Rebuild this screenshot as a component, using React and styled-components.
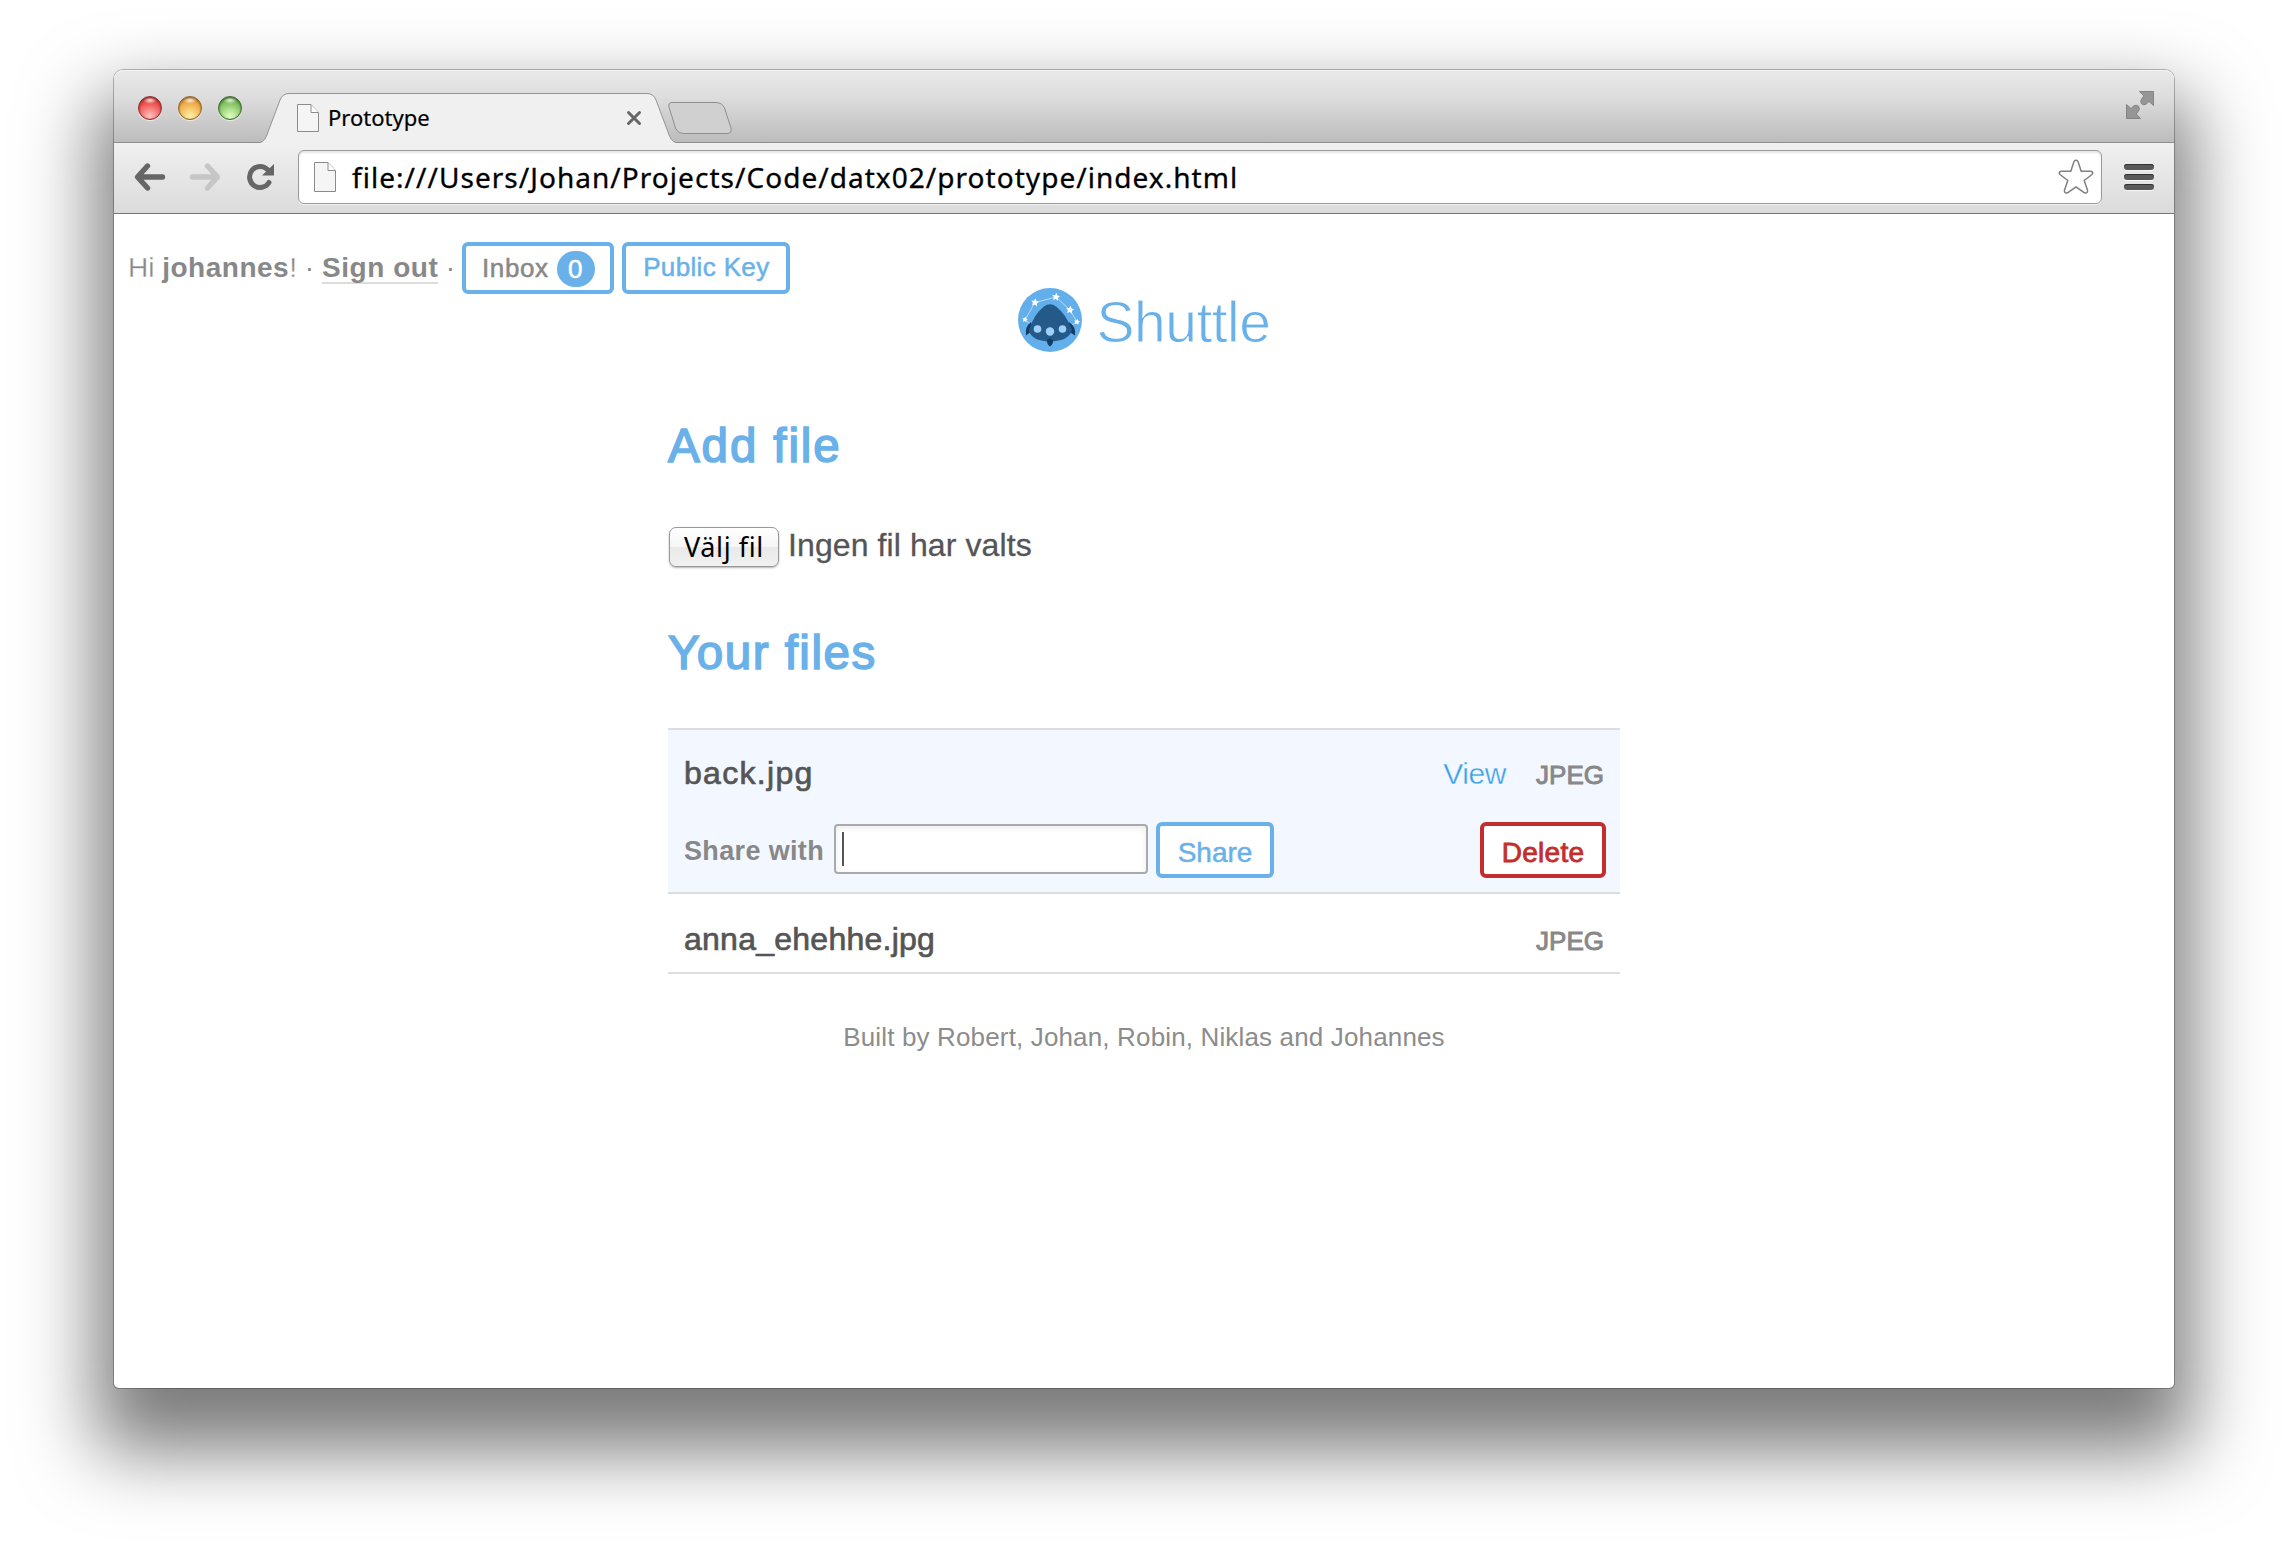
import React from "react";
import styled, { createGlobalStyle } from "styled-components";

const blue = "#6ab1ea";

const Global = createGlobalStyle`
  * { box-sizing: border-box; }
  html, body { margin: 0; background: #fff; }
  body { font-family: "Liberation Sans", Arial, sans-serif; width: 2288px; height: 1546px; overflow: hidden; }
  svg { display: block; flex: none; overflow: visible; }
`;

const Desktop = styled.div`
  width: 2288px;
  height: 1546px;
  padding: 70px 114px 158px;
  background: #fff;
`;

const BrowserWindow = styled.main`
  display: flex;
  flex-direction: column;
  width: 2060px;
  height: 1318px;
  border-radius: 9px 9px 5px 5px;
  background: #fff;
  box-shadow: 0 0 0 1px rgba(0, 0, 0, 0.25), 0 45px 76px 18px rgba(0, 0, 0, 0.52);
`;

const TabStrip = styled.header`
  display: flex;
  height: 73px;
  padding-left: 24px;
  border-bottom: 1px solid #8c8c8c;
  border-radius: 9px 9px 0 0;
  background: linear-gradient(#e9e9e9, #dcdcdc 40%, #bcbcbc);
  box-shadow: inset 0 1px 0 #f4f4f4;
`;

const Lights = styled.div`
  display: flex;
  gap: 16px;
  width: 122px;
  padding-top: 26px;
`;

const Light = styled.span`
  width: 24px;
  height: 24px;
  border: 1px solid ${(p) => p.$edge};
  border-radius: 50%;
  background:
    radial-gradient(ellipse 7px 4px at 50% 3px, rgba(255, 255, 255, 0.85), transparent),
    radial-gradient(circle at 50% 88%, ${(p) => p.$glow}, ${(p) => p.$color} 62%, ${(p) => p.$edge} 110%);
  box-shadow: 0 1px 1px rgba(255, 255, 255, 0.7), inset 0 1px 2px ${(p) => p.$edge};
`;

const Tab = styled.div`
  position: relative;
  display: flex;
  align-items: center;
  width: 416px;
  height: 73px;
  padding: 23px 35px 0 37px;
`;

const TabShape = styled.svg`
  position: absolute;
  left: 0;
  top: 0;
`;

const TabTitle = styled.span`
  position: relative;
  flex: 1;
  margin: -2px 0 0 9px;
  font: 22px/28px "Noto Sans", sans-serif;
  letter-spacing: ${(p) => p.$ls}px;
  color: #000;
  -webkit-text-stroke: 0.2px currentColor;
`;

const Raised = styled.span`
  position: relative;
  display: flex;
`;

const NewTab = styled.div`
  margin: 32px 0 0 -8px;
`;

const Expand = styled.div`
  margin: 21px 20px 0 auto;
`;

const Toolbar = styled.nav`
  display: flex;
  align-items: center;
  height: 71px;
  padding: 0 20px 2px;
  border-bottom: 1px solid #767676;
  background: linear-gradient(#f0f0f0, #dbdbdb);
`;

const NavIcons = styled.div`
  display: flex;
  gap: 25px;
  width: 164px;
`;

const Omnibox = styled.div`
  display: flex;
  align-items: center;
  width: 1804px;
  height: 54px;
  padding: 0 7px 0 15px;
  border: 1px solid #9a9a9a;
  border-radius: 6px;
  background: #fff;
  box-shadow: inset 0 2px 2px rgba(0, 0, 0, 0.1), 0 1px 0 rgba(255, 255, 255, 0.6);
`;

const Url = styled.span`
  flex: 1;
  margin-left: 16px;
  font: 28px/40px "Noto Sans", sans-serif;
  letter-spacing: ${(p) => p.$ls}px;
  white-space: nowrap;
  color: #000;
  -webkit-text-stroke: 0.3px currentColor;
`;

const Menu = styled.div`
  display: grid;
  gap: 4px;
  width: 30px;
  margin-left: 22px;
`;

const Bar = styled.span`
  height: 6px;
  border-radius: 3px;
  background: #5a5a5a;
  box-shadow: inset 0 1px 0 #333, 0 1px 0 #f6f6f6;
`;

const Page = styled.section`
  display: flex;
  flex-direction: column;
  align-items: center;
  flex: 1;
  padding-top: 28px;
  color: #555;
`;

const Account = styled.div`
  display: flex;
  align-items: center;
  align-self: flex-start;
  height: 52px;
  padding-left: 14px;
  font-size: 28px;
  line-height: 32px;
  color: #888;
  white-space: pre;
`;

const Thin = styled.span`
  margin-top: -1px;
  -webkit-text-stroke: 0.3px #fff;
`;

const Name = styled.strong`
  margin-top: -1px;
  letter-spacing: 0.5px;
`;

const SignOut = styled.a`
  height: 32px;
  margin-top: -1px;
  border-bottom: 2px solid #ddd;
  font-weight: bold;
  letter-spacing: 0.55px;
`;

const Dot = styled.span`
  width: ${(p) => p.$w}px;
  text-align: center;
`;

const Button = styled.button`
  display: flex;
  align-items: center;
  justify-content: center;
  width: ${(p) => p.$w}px;
  height: ${(p) => p.$h || 52}px;
  margin: 0 0 0 ${(p) => p.$ml || 0}px;
  padding: ${(p) => p.$pt || 0}px 0 ${(p) => p.$pb || 0}px;
  border: 4px solid ${(p) => p.$tone || blue};
  border-radius: 6px;
  background: #fff;
  color: ${(p) => p.$ink || p.$tone || blue};
  font: ${(p) => p.$size || 26}px/30px "Liberation Sans", Arial, sans-serif;
  letter-spacing: ${(p) => p.$ls || 0}px;
  -webkit-text-stroke: ${(p) => p.$bold ?? 0.5}px currentColor;
`;

const Badge = styled.span`
  width: 38px;
  height: 36px;
  margin: 2px 0 0 8px;
  border-radius: 18px;
  background: ${blue};
  color: #fff;
  line-height: 36px;
  text-align: center;
`;

const Brand = styled.div`
  display: flex;
  align-items: center;
  gap: 15px;
  height: 64px;
  margin-top: -6px;
`;

const Wordmark = styled.h1`
  margin: 3px 0 0;
  font-size: 57px;
  font-weight: normal;
  line-height: 64px;
  letter-spacing: -0.5px;
  color: ${blue};
  -webkit-text-stroke: 0.9px #fff;
`;

const Content = styled.div`
  width: 952px;
`;

const Heading = styled.h2`
  margin: ${(p) => p.$mt}px 0 0;
  font-size: 47.5px;
  font-weight: normal;
  line-height: 56px;
  letter-spacing: ${(p) => p.$ls}px;
  color: ${blue};
  -webkit-text-stroke: 1.6px currentColor;
`;

const Picker = styled.div`
  display: flex;
  align-items: center;
  height: 40px;
  margin-top: 53px;
  padding-left: 1px;
`;

const PickButton = styled.button`
  width: 110px;
  height: 40px;
  padding: 0;
  border: 1px solid #999;
  border-radius: 7px;
  background: linear-gradient(#fff, #f5f5f5 50%, #e9e9e9 51%, #f1f1f1);
  box-shadow: 0 1px 2px rgba(0, 0, 0, 0.3);
  font: 27px/36px "Noto Sans", sans-serif;
  letter-spacing: 0.6px;
  color: #000;
`;

const PickState = styled.span`
  margin: -4px 0 0 9px;
  font-size: 32px;
  letter-spacing: 0.1px;
  -webkit-text-stroke: 0.3px currentColor;
`;

const Files = styled.ul`
  margin: 47px 0 0;
  padding: 0;
  border-top: 2px solid #ddd;
  list-style: none;
`;

const File = styled.li`
  height: ${(p) => p.$h}px;
  padding: ${(p) => p.$pt}px 16px 0;
  border-bottom: 2px solid #ddd;
  background: ${(p) => (p.$open ? "#f3f7ff" : "#fff")};
`;

const Row = styled.div`
  display: flex;
  align-items: baseline;
  line-height: 36px;
`;

const FileName = styled.span`
  flex: 1;
  font-size: 32px;
  letter-spacing: ${(p) => p.$ls}px;
  -webkit-text-stroke: 0.7px currentColor;
`;

const ViewLink = styled.a`
  margin-right: 30px;
  font-size: 30px;
  letter-spacing: -0.4px;
  color: #3a9fe6;
  -webkit-text-stroke: 0.4px #f3f7ff;
`;

const Kind = styled.span`
  font-size: 26px;
  color: #888;
  -webkit-text-stroke: 0.9px currentColor;
`;

const ShareRow = styled.div`
  display: flex;
  align-items: center;
  height: 56px;
  margin: 29px -2px 0 0;
`;

const ShareLabel = styled.label`
  width: 150px;
  margin-top: 2px;
  font-size: 27px;
  font-weight: bold;
  letter-spacing: 0.35px;
  color: #888;
`;

const Field = styled.div`
  width: 314px;
  height: 50px;
  margin-top: -2px;
  padding: 6px;
  border: 2px solid #aaa;
  border-radius: 4px;
  background: #fff;
  box-shadow: inset 0 2px 6px rgba(0, 0, 0, 0.08);
`;

const Caret = styled.span`
  display: block;
  width: 2px;
  height: 34px;
  background: #555;
`;

const Spacer = styled.span`
  flex: 1;
`;

const Credits = styled.footer`
  margin-top: 47px;
  font-size: 26px;
  line-height: 32px;
  letter-spacing: 0.15px;
  color: #8c8c8c;
  text-align: center;
`;

const PageIcon = ({ h = 28 }) => (
  <svg width="22" height={h} viewBox={`0 0 22 ${h}`} fill="none">
    <path d={`M.5 .5H14L21.5 8.500V${h - 0.5}H.5Z`} fill="#f5f5f5" stroke="#8b8b8b" />
    <path d="M14 .5V8.500H21.500" fill="#fff" stroke="#8b8b8b" />
  </svg>
);

const Arrow = ({ color, flip }) => (
  <svg width="31" height="28" viewBox="0 0 31 28" fill="none" stroke={color} strokeWidth="5.400" strokeLinecap="round" strokeLinejoin="round">
    <g transform={flip ? "translate(31 0) scale(-1 1)" : undefined}>
      <path d="M13.500 3L3.500 14L13.500 25M5 14H28.500" />
    </g>
  </svg>
);

const Reload = () => (
  <svg width="28" height="28" viewBox="0 0 28 28" fill="none">
    <path d="M21.500 6.500A10.500 10.500 0 1 0 23 19.500" stroke="#666" strokeWidth="5" strokeLinecap="round" />
    <path d="M28 1V12.500H16Z" fill="#666" />
  </svg>
);

const Star = () => (
  <svg width="36" height="36" viewBox="0 0 36 36" fill="#fff" stroke="#808080" strokeWidth="1.500" strokeLinejoin="round">
    <path d="M16 2.500Q18 .2 20 2.500L23.200 12.200H33Q36 13.200 34 15.500L26.200 21.500L29.600 31.500Q29.500 34.800 26.500 33.800L18 27.800L9.500 33.800Q6.500 34.800 6.400 31.500L9.800 21.500L2 15.500Q0 13.200 3 12.200H12.800Z" />
  </svg>
);

const FullScreen = () => (
  <svg width="28" height="28" viewBox="0 0 28 28" fill="#969696" stroke="#777" strokeWidth=".8">
    <path d="M13.500 .5H27.500V14.500L23 10.500L20 13.200Q17.500 14.500 15.500 12.800Q13.800 10.500 15.500 8L17.800 5Z" />
    <path d="M14.500 27.500H.5V13.500L5 17.500L8 14.800Q10.500 13.500 12.500 15.200Q14.200 17.500 12.500 20L10.200 23Z" />
  </svg>
);

const starPoints = (cx, cy, r) =>
  Array.from({ length: 10 }, (_, i) => {
    const a = -Math.PI / 2 + 0.15 + (i * Math.PI) / 5;
    const d = i % 2 ? r * 0.5 : r;
    return `${(cx + d * Math.cos(a)).toFixed(2)},${(cy + d * Math.sin(a)).toFixed(2)}`;
  }).join(" ");

const Logo = () => (
  <svg width="64" height="64" viewBox="0 0 64 64">
    <circle cx="32" cy="32" r="32" fill="#63afeb" />
    <path d="M14 37L7 32L17 14.500L38 9L52 22L59 34L52 38" fill="none" stroke="#b9dcf8" strokeWidth="1" />
    {[[7, 31.5, 3], [17, 14.5, 4.2], [38, 9, 4.2], [52, 22, 4.2], [59, 34, 3.2]].map(([x, y, r]) => (
      <polygon key={x} points={starPoints(x, y, r)} fill="#fff" />
    ))}
    <path d="M13 34Q6.500 39 8 47.500L14 43ZM51 34Q58.500 39 57 47.500L50 43Z" fill="#123e66" />
    <path d="M26 18.500Q32 14 38 18.500Q48 26 54 42Q51 53 32 53.500Q13 53 11 42Q16 26 26 18.500Z" fill="#235a89" />
    <path d="M29 52Q32 48.500 35 52Q35.500 56 32 58.500Q28.500 56 29 52Z" fill="#123e66" />
    <circle cx="19.500" cy="41" r="3.800" fill="#9fd0fa" />
    <circle cx="32" cy="43.500" r="4.200" fill="#9fd0fa" />
    <circle cx="44.500" cy="41" r="3.800" fill="#9fd0fa" />
  </svg>
);

export default function App() {
  return (
    <Desktop>
      <Global />
      <BrowserWindow>
        <TabStrip>
          <Lights>
            <Light $color="#ef4f4c" $glow="#ffc4c0" $edge="#8e2a28" />
            <Light $color="#f0a946" $glow="#fff3a8" $edge="#93642a" />
            <Light $color="#7fc25f" $glow="#e2ffc4" $edge="#3d6c2e" />
          </Lights>
          <Tab>
            <TabShape width="416" height="73" viewBox="0 0 416 73">
              <path d="M0 72.500Q5 72 8 62L20 30Q22.500 23.500 29 23.500H387Q393.500 23.500 396 30L408 62Q411 72 416 72.500V73.500H0Z" fill="#f0f0f0" />
              <path d="M0 72.500Q5 72 8 62L20 30Q22.500 23.500 29 23.500H387Q393.500 23.500 396 30L408 62Q411 72 416 72.500" fill="none" stroke="#949494" />
            </TabShape>
            <Raised><PageIcon /></Raised>
            <TabTitle $ls={0}>Prototype</TabTitle>
            <Raised>
              <svg width="14" height="14" viewBox="0 0 14 14" stroke="#666" strokeWidth="3" strokeLinecap="round">
                <path d="M1.500 1.500L12.500 12.500M12.500 1.500L1.500 12.500" />
              </svg>
            </Raised>
          </Tab>
          <NewTab>
            <svg width="63" height="32" viewBox="0 0 63 32">
              <path d="M4 .5H48Q54 .5 56.500 6L63 26Q64 31.500 59 31.500H16Q10 31.500 7.500 26L1 5Q0 .5 4 .5Z" fill="#d0d0d0" stroke="#8f8f8f" />
            </svg>
          </NewTab>
          <Expand><FullScreen /></Expand>
        </TabStrip>
        <Toolbar>
          <NavIcons>
            <Arrow color="#666" />
            <Arrow color="#c6c6c6" flip />
            <Reload />
          </NavIcons>
          <Omnibox>
            <PageIcon h={30} />
            <Url $ls={1.04}>file:///Users/Johan/Projects/Code/datx02/prototype/index.html</Url>
            <Star />
          </Omnibox>
          <Menu>
            <Bar />
            <Bar />
            <Bar />
          </Menu>
        </Toolbar>
        <Page>
          <Account>
            <Thin>Hi </Thin>
            <Name>johannes</Name>
            <Thin>!</Thin>
            <Dot $w={25}>·</Dot>
            <SignOut>Sign out</SignOut>
            <Dot $w={24}>·</Dot>
            <Button $w={152} $ink="#888" $ls={0.6}>
              Inbox
              <Badge>0</Badge>
            </Button>
            <Button $w={168} $ml={8} $ls={0.35} $pb={2}>Public Key</Button>
          </Account>
          <Brand>
            <Logo />
            <Wordmark>Shuttle</Wordmark>
          </Brand>
          <Content>
            <Heading $mt={66} $ls={1.9}>Add file</Heading>
            <Picker>
              <PickButton>Välj fil</PickButton>
              <PickState>Ingen fil har valts</PickState>
            </Picker>
            <Heading $mt={58} $ls={1.5}>Your files</Heading>
            <Files>
              <File $open $h={164} $pt={25}>
                <Row>
                  <FileName $ls={1.3}>back.jpg</FileName>
                  <ViewLink>View</ViewLink>
                  <Kind>JPEG</Kind>
                </Row>
                <ShareRow>
                  <ShareLabel>Share with</ShareLabel>
                  <Field><Caret /></Field>
                  <Button $w={118} $h={56} $ml={8} $size={28} $pt={5}>Share</Button>
                  <Spacer />
                  <Button $w={126} $h={56} $size={28} $pt={5} $tone="#c22e2e" $ls={0.3} $bold={0.8}>Delete</Button>
                </ShareRow>
              </File>
              <File $h={80} $pt={27}>
                <Row>
                  <FileName $ls={0.25}>anna_ehehhe.jpg</FileName>
                  <Kind>JPEG</Kind>
                </Row>
              </File>
            </Files>
            <Credits>Built by Robert, Johan, Robin, Niklas and Johannes</Credits>
          </Content>
        </Page>
      </BrowserWindow>
    </Desktop>
  );
}
